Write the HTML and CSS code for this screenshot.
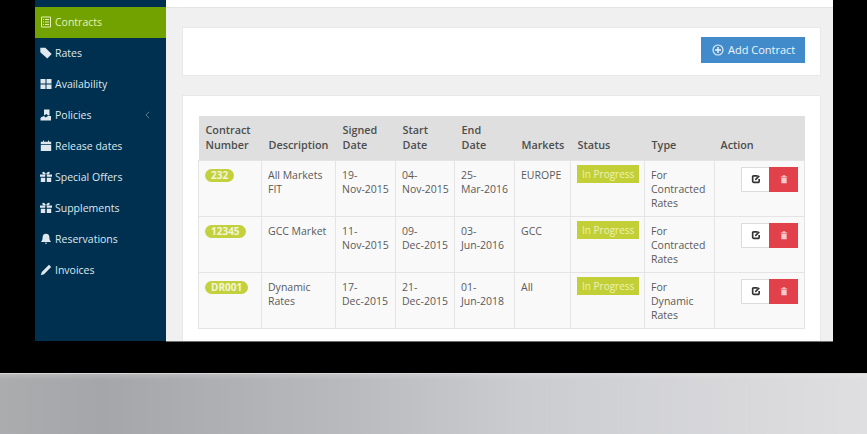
FILE: index.html
```html
<!DOCTYPE html>
<html lang="en">
<head>
<meta charset="utf-8">
<title>Contracts</title>
<link rel="stylesheet" href="styles.css">
</head>
<body>
<svg class="defs" width="0" height="0" aria-hidden="true">
  <defs>
    <symbol id="i-gift" viewBox="0 0 12 12"><path d="M0 3.400h5.200v2.400H0zM6.800 3.400H12v2.400H6.800zM.8 6.800h4.400V11H.8zM6.800 6.800h4.400V11H6.800zM6 3.200C4.600 1 3.400.4 2.600 1c-.8.700-.2 2 1 2.200zM6 3.200C7.400 1 8.600.4 9.400 1c.8.700.2 2-1 2.200z"/></symbol>
    <symbol id="i-edit" viewBox="0 0 12 12"><path fill="none" stroke="currentColor" stroke-width="2" d="M8 2.200H3.200a1.200 1.200 0 0 0-1.200 1.200v5.400A1.200 1.200 0 0 0 3.200 10h5.400a1.200 1.200 0 0 0 1.200-1.200V6"/><path fill="currentColor" d="M5 5.800 9.200 1.600l1.400 1.400L6.400 7.200 4.800 7.400z"/></symbol>
    <symbol id="i-trash" viewBox="0 0 12 12"><path d="M2 3h8v1H2zM4.500 1.500h3V3h-3zM2.800 4.500h6.400V11H2.800z"/></symbol>
  </defs>
</svg>
<div class="bezel">
  <div class="screen">
    <nav class="sidebar">
      <a class="item active"><svg class="ico" viewBox="0 0 12 12"><path fill="none" stroke="currentColor" d="M1.500 1h9v10h-9z"/><path d="M3 3h1v1H3zM5 3h4v1H5zM3 5.500h1v1H3zM5 5.500h4v1H5zM3 8h1v1H3zM5 8h4v1H5z"/></svg><span>Contracts</span></a>
      <a class="item"><svg class="ico" viewBox="0 0 12 12"><path d="M.3.800h5l6.400 6.200-4.400 4.400L.3 5.300z"/></svg><span>Rates</span></a>
      <a class="item"><svg class="ico" viewBox="0 0 12 12"><path d="M.5 1h5v4.600h-5zM6.500 1h5v4.600h-5zM.5 6.500h5V11h-5zM6.500 6.500h5V11h-5z"/></svg><span>Availability</span></a>
      <a class="item"><svg class="ico" viewBox="0 0 12 12"><path d="M4 .5h5.500v6H8L6.500 5 4 6.500zM1.500 8l2.500-1 1.500 1.500L8 7h3v4.500H.5V9z"/></svg><span>Policies</span><svg class="caret" viewBox="0 0 6 10"><path fill="none" stroke="currentColor" stroke-width="1.200" d="M5 1 1 5l4 4"/></svg></a>
      <a class="item"><svg class="ico" viewBox="0 0 12 12"><path d="M.8 1.800h10.400v2.400H.8zM.8 5h10.400v6H.8zM3 .6h1v1.800H3zM8 .6h1v1.800H8z"/></svg><span>Release dates</span></a>
      <a class="item"><svg class="ico"><use href="#i-gift"/></svg><span>Special Offers</span></a>
      <a class="item"><svg class="ico"><use href="#i-gift"/></svg><span>Supplements</span></a>
      <a class="item"><svg class="ico" viewBox="0 0 12 12"><path d="M6 .8c2.300 0 3.400 1.700 3.400 3.700 0 2.200.7 3.400 1.800 4.500H.8c1.100-1.100 1.800-2.300 1.800-4.500C2.600 2.500 3.700.8 6 .8zM4.800 9.800h2.400L6 11.200z"/></svg><span>Reservations</span></a>
      <a class="item"><svg class="ico" viewBox="0 0 12 12"><path d="M9 .8 11.200 3 4 10.200.8 11.200 1.800 8z"/></svg><span>Invoices</span></a>
    </nav>
    <main class="main">
      <div class="topbar"></div>
      <div class="content">
        <section class="card card-action">
          <button class="add-btn"><svg class="plus" viewBox="0 0 12 12"><circle cx="6" cy="6" r="5" fill="none" stroke="currentColor" stroke-width="1.100"/><path fill="currentColor" d="M5.300 3h1.400v2.300H9v1.400H6.700V9H5.300V6.700H3V5.300h2.300z"/></svg>Add Contract</button>
        </section>
        <section class="card card-table">
          <table class="grid">
            <colgroup>
              <col class="c1"><col class="c2"><col class="c3"><col class="c4"><col class="c5"><col class="c6"><col class="c7"><col class="c8"><col class="c9">
            </colgroup>
            <thead>
              <tr><th>Contract Number</th><th>Description</th><th>Signed Date</th><th>Start Date</th><th>End<br>Date</th><th>Markets</th><th>Status</th><th>Type</th><th>Action</th></tr>
            </thead>
            <tbody>
              <tr>
                <td><span class="pill">232</span></td><td>All Markets FIT</td><td>19-<br>Nov-2015</td><td>04-<br>Nov-2015</td><td>25-<br>Mar-2016</td><td>EUROPE</td><td><span class="status">In Progress</span></td><td>For Contracted Rates</td>
                <td class="acts"><div class="btns"><a class="b-edit"><svg class="act"><use href="#i-edit"/></svg></a><a class="b-del"><svg class="act"><use href="#i-trash"/></svg></a></div></td>
              </tr>
              <tr>
                <td><span class="pill">12345</span></td><td>GCC Market</td><td>11-<br>Nov-2015</td><td>09-<br>Dec-2015</td><td>03-<br>Jun-2016</td><td>GCC</td><td><span class="status">In Progress</span></td><td>For Contracted Rates</td>
                <td class="acts"><div class="btns"><a class="b-edit"><svg class="act"><use href="#i-edit"/></svg></a><a class="b-del"><svg class="act"><use href="#i-trash"/></svg></a></div></td>
              </tr>
              <tr>
                <td><span class="pill">DR001</span></td><td>Dynamic Rates</td><td>17-<br>Dec-2015</td><td>21-<br>Dec-2015</td><td>01-<br>Jun-2018</td><td>All</td><td><span class="status">In Progress</span></td><td>For Dynamic Rates</td>
                <td class="acts"><div class="btns"><a class="b-edit"><svg class="act"><use href="#i-edit"/></svg></a><a class="b-del"><svg class="act"><use href="#i-trash"/></svg></a></div></td>
              </tr>
            </tbody>
          </table>
        </section>
      </div>
    </main>
  </div>
</div>
<div class="base"></div>
</body>
</html>
```

FILE: styles.css
```css
* { box-sizing: border-box; }
html, body { margin: 0; padding: 0; }
body {
  width: 867px;
  height: 434px;
  overflow: hidden;
  background: #000;
  font-family: "Open Sans", "Liberation Sans", sans-serif;
  font-size: 10.500px;
  color: #555;
}
.defs { display: block; height: 0; }
.bezel {
  height: 373px;
  background: #000;
  padding: 0 34px 31px 35px;
}
.screen {
  display: flex;
  height: 342px;
  overflow: hidden;
}
.sidebar {
  width: 131px;
  height: 341px;
  flex: none;
  background: #003050;
  padding-top: 7px;
}
.item {
  display: flex;
  align-items: center;
  height: 31px;
  padding: 0 16px 2px 5px;
  color: #dfe8ee;
  font-size: 10.500px;
}
.item.active { background: #72a200; color: #e4f2b8; }
.ico {
  width: 12px;
  height: 12px;
  margin-right: 3px;
  fill: currentColor;
  flex: none;
}
.item span { flex: 1; }
.caret { width: 5px; height: 8px; color: #5f7f94; flex: none; }
.main {
  flex: 1;
  display: flex;
  flex-direction: column;
  min-width: 0;
  height: 342px;
  overflow: hidden;
  background: #f0f0f0;
  border-bottom: 1px solid #6f6f6f;
}
.topbar {
  height: 8px;
  flex: none;
  background: #fff;
  border-bottom: 1px solid #e4e4e4;
}
.content {
  padding: 19px 12px 0 16px;
  display: flex;
  flex-direction: column;
  gap: 19px;
}
.card {
  background: #fff;
  border: 1px solid #e8e8e8;
}
.card-action {
  height: 49px;
  display: flex;
  justify-content: flex-end;
  align-items: flex-start;
  padding: 9px 15px 0 0;
}
.add-btn {
  display: flex;
  align-items: center;
  gap: 4px;
  height: 26px;
  width: 104px;
  border: 0;
  padding: 0 0 1px 11px;
  background: #428bca;
  color: #eef5fb;
  font: 11px "Open Sans", "Liberation Sans", sans-serif;
}
.plus { width: 12px; height: 12px; flex: none; }
.card-table {
  height: 260px;
  padding: 20px 15px 0;
}
.grid {
  width: 606px;
  table-layout: fixed;
  border-collapse: collapse;
  line-height: 14.300px;
}
.c1 { width: 63px; }
.c2 { width: 74px; }
.c3 { width: 60px; }
.c4 { width: 59px; }
.c5 { width: 60px; }
.c6 { width: 56px; }
.c7 { width: 74px; }
.c8 { width: 70px; }
.c9 { width: 90px; }
th {
  background: #dfdfdf;
  color: #4d4d4d;
  font-weight: 600;
  font-size: 10.800px;
  line-height: 15.500px;
  text-align: left;
  vertical-align: bottom;
  height: 44px;
  padding: 0 2px 7px 7px;
}
th:last-child { padding-left: 6px; }
td {
  height: 56px;
  vertical-align: top;
  padding: 7px 2px 0 6px;
  background: #f9f9f9;
  border: 1px solid #e4e4e4;
  color: #5a5a5a;
}
.pill {
  display: inline-block;
  background: #c3d13f;
  color: #f3f6d5;
  border-radius: 8px;
  font-weight: 700;
  font-size: 10px;
  line-height: 13px;
  padding: 0 6px;
  margin-top: 1px;
}
.status {
  display: inline-block;
  background: #c3cf36;
  color: #eef2b4;
  font-size: 10px;
  line-height: 18px;
  padding: 0 5px;
  margin-top: -3px;
  white-space: nowrap;
  vertical-align: top;
}
td.acts { padding: 6px 6px 0 0; }
.btns { display: flex; justify-content: flex-end; }
.btns a {
  display: flex;
  align-items: center;
  justify-content: center;
  height: 25px;
}
.b-edit { width: 28px; background: #fff; border: 1px solid #dcdcdc; border-right: 0; color: #333; }
.b-del { width: 29px; background: #e2404a; color: #f7c9c9; }
.act { width: 10px; height: 10px; fill: currentColor; }
.base {
  height: 61px;
  border-top: 1px solid #d8d8d8;
  background:
    linear-gradient(180deg, rgba(255, 255, 255, .18) 0, rgba(255, 255, 255, 0) 6px),
    linear-gradient(90deg, #abacae 0%, #a5a6a9 12%, #b9babd 40%, #cbccd0 60%, #dfdfe1 100%);
}
```
